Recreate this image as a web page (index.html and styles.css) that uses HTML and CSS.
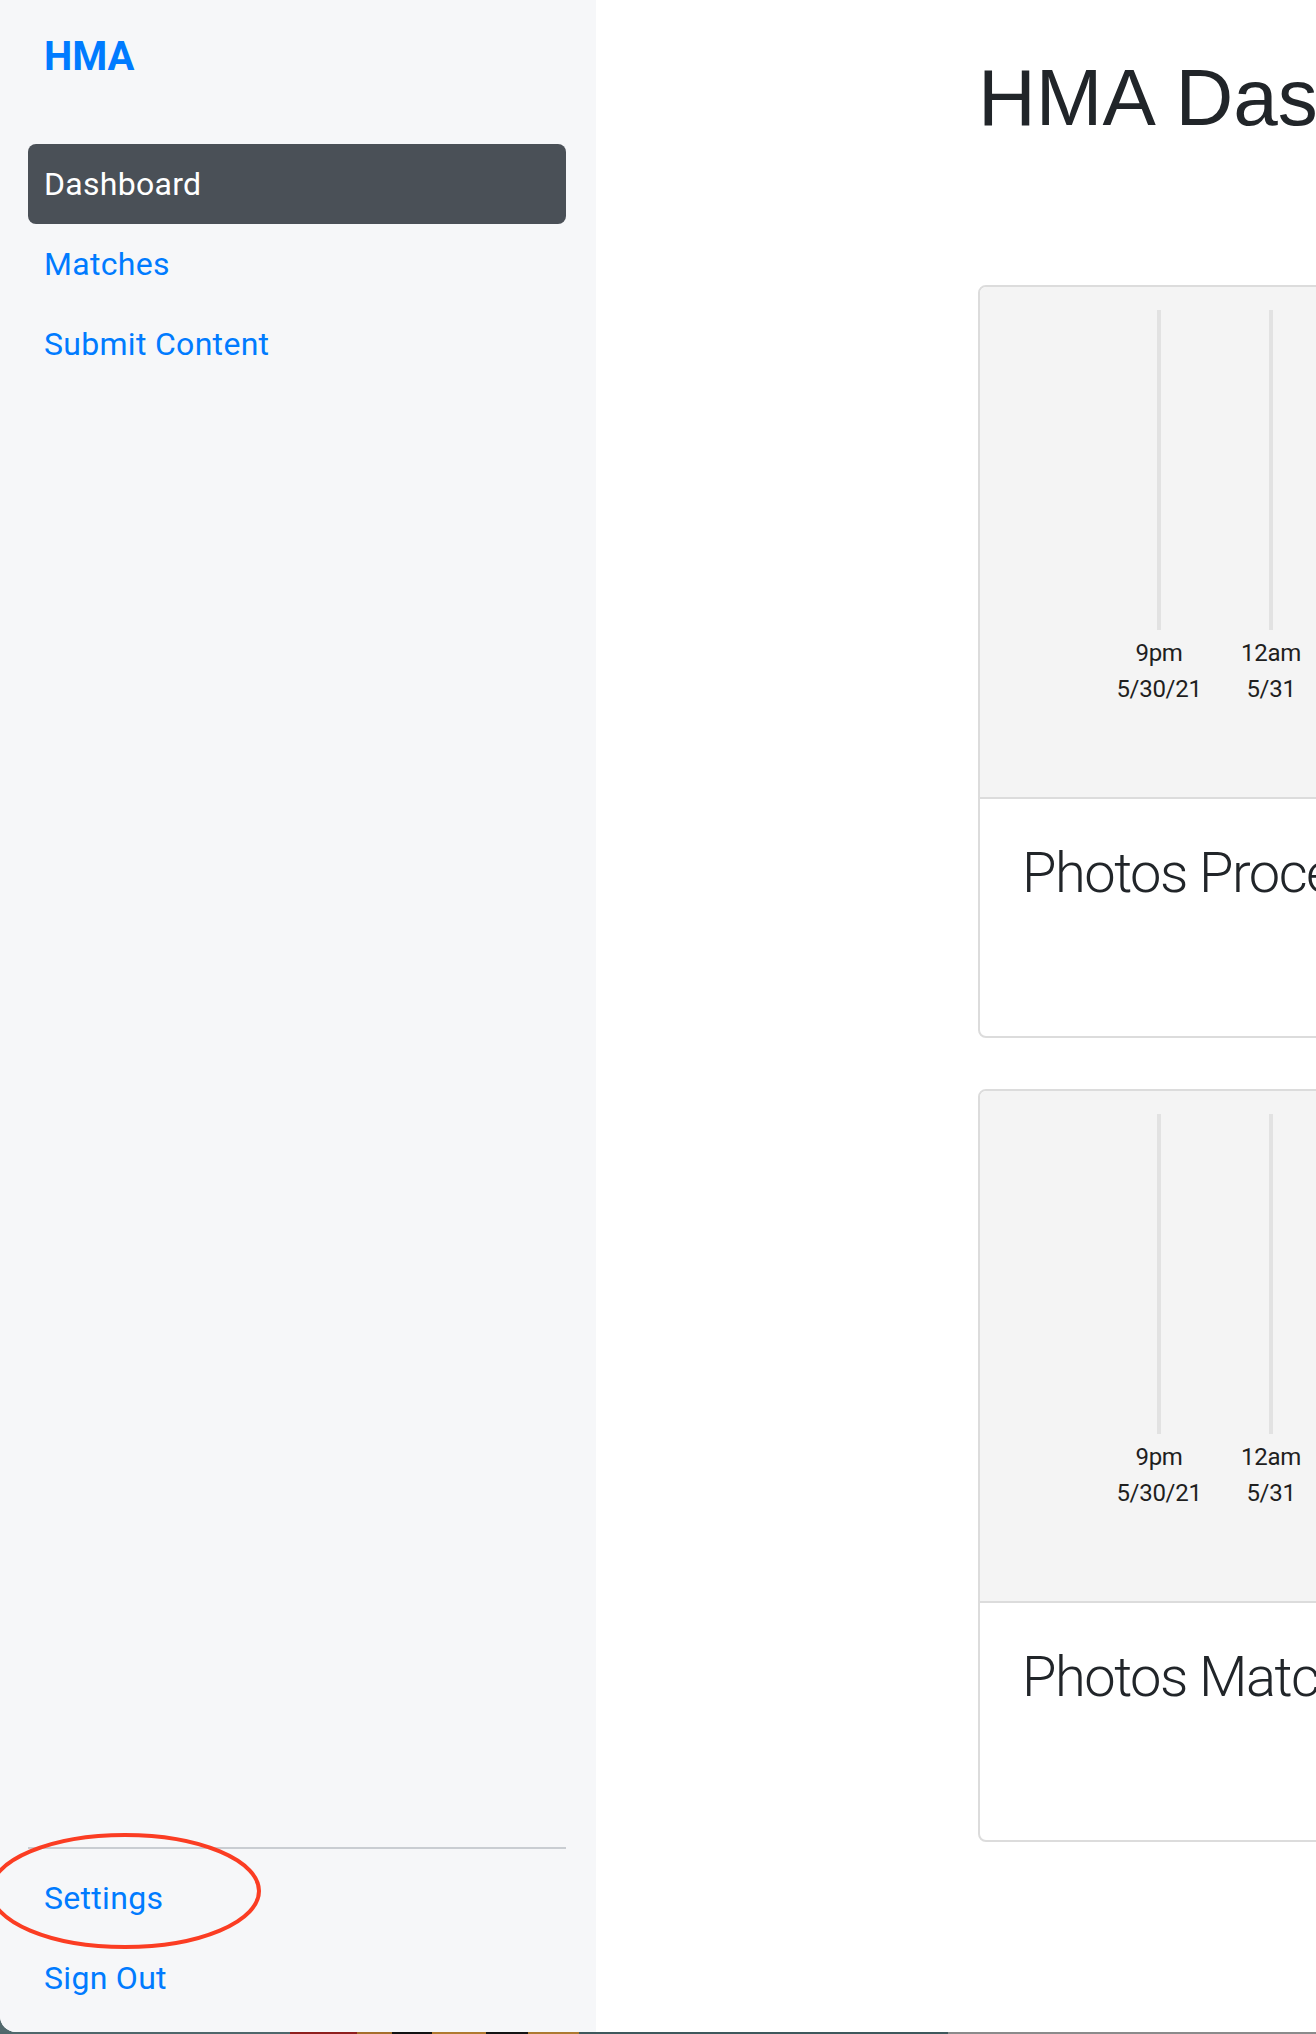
FILE: index.html
```html
<!DOCTYPE html>
<html lang="en">
<head>
<meta charset="utf-8">
<title>HMA Dashboard</title>
<link rel="stylesheet" href="styles.css">
</head>
<body>
<div class="desktop">
  <div class="window">
    <aside class="sidebar">
      <a class="brand" href="#">HMA</a>
      <nav class="nav">
        <a class="nav-link active" href="#">Dashboard</a>
        <a class="nav-link" href="#">Matches</a>
        <a class="nav-link" href="#">Submit Content</a>
      </nav>
      <div class="sidebar-bottom">
        <hr class="divider">
        <a class="nav-link" href="#">Settings</a>
        <a class="nav-link" href="#">Sign Out</a>
        <svg class="annotation" width="300" height="140" viewBox="0 0 300 140" aria-hidden="true">
          <ellipse cx="137" cy="69" rx="134" ry="56" fill="none" stroke="#fb3d23" stroke-width="4"/>
        </svg>
      </div>
    </aside>
    <main class="main">
      <div class="content">
        <h1 class="page-title">HMA Dashboard</h1>
        <section class="card">
          <div class="chart">
            <div class="tick" style="left: 119px;">
              <span class="gridline"></span>
              <span class="tick-label">9pm</span>
              <span class="tick-label">5/30/21</span>
            </div>
            <div class="tick" style="left: 231px;">
              <span class="gridline"></span>
              <span class="tick-label">12am</span>
              <span class="tick-label">5/31</span>
            </div>
          </div>
          <div class="card-body">
            <h3 class="card-title">Photos Processed</h3>
          </div>
        </section>
        <section class="card">
          <div class="chart">
            <div class="tick" style="left: 119px;">
              <span class="gridline"></span>
              <span class="tick-label">9pm</span>
              <span class="tick-label">5/30/21</span>
            </div>
            <div class="tick" style="left: 231px;">
              <span class="gridline"></span>
              <span class="tick-label">12am</span>
              <span class="tick-label">5/31</span>
            </div>
          </div>
          <div class="card-body">
            <h3 class="card-title">Photos Matched</h3>
          </div>
        </section>
      </div>
    </main>
  </div>
  <div class="strip">
    <span class="seg seg-teal1"></span>
    <span class="seg seg-red"></span>
    <span class="seg seg-orange1"></span>
    <span class="seg seg-black1"></span>
    <span class="seg seg-orange2"></span>
    <span class="seg seg-black2"></span>
    <span class="seg seg-orange3"></span>
    <span class="seg seg-teal2"></span>
    <span class="seg seg-gray"></span>
  </div>
</div>
</body>
</html>
```
FILE: styles.css
```css
html, body {
  margin: 0;
  padding: 0;
}

body {
  width: 1316px;
  height: 2034px;
  overflow: hidden;
  background: #52696d;
  font-family: Roboto, "Noto Sans", "Liberation Sans", sans-serif;
}

.desktop {
  display: flex;
  flex-direction: column;
  width: 1316px;
  height: 2034px;
  background: #52696d;
}

.window {
  display: flex;
  height: 2032px;
  flex-shrink: 0;
  overflow: hidden;
  border-bottom-left-radius: 16px;
  background: #ffffff;
}

/* Sidebar */
.sidebar {
  width: 596px;
  flex-shrink: 0;
  box-sizing: border-box;
  display: flex;
  flex-direction: column;
  padding: 27px 30px 14px 28px;
  background: #f6f7f9;
}

.brand {
  display: block;
  padding-left: 16px;
  font-size: 40px;
  line-height: 60px;
  font-weight: 700;
  color: #007bff;
  text-decoration: none;
}

.nav {
  display: flex;
  flex-direction: column;
  margin-top: 57px;
}

.nav-link {
  display: block;
  padding: 16px 16px;
  font-size: 32px;
  line-height: 48px;
  letter-spacing: 0.3px;
  color: #007bff;
  text-decoration: none;
  border-radius: 8px;
}

.nav-link.active {
  background: #4a5057;
  color: #ffffff;
}

.sidebar-bottom {
  position: relative;
  margin-top: auto;
  display: flex;
  flex-direction: column;
}

.divider {
  margin: 0 0 9px 0;
  height: 2px;
  border: 0;
  background: #c9cdd2;
}

.annotation {
  position: absolute;
  left: -40px;
  top: -25px;
  overflow: visible;
  pointer-events: none;
}

/* Main */
.main {
  flex: 1;
  min-width: 0;
  overflow: hidden;
}

.content {
  width: 1300px;
  padding: 50px 0 0 382px;
}

.page-title {
  margin: 0 0 139px 0;
  font-family: "Liberation Sans", Arial, sans-serif;
  font-size: 80px;
  line-height: 96px;
  font-weight: 400;
  letter-spacing: 0;
  word-spacing: 2px;
  color: #212529;
  white-space: nowrap;
}

.card {
  width: 900px;
  border: 2px solid #dcdcdc;
  border-radius: 8px;
  overflow: hidden;
  margin-bottom: 51px;
  background: #ffffff;
}

.chart {
  position: relative;
  height: 510px;
  background: #f4f4f4;
  border-bottom: 2px solid #dcdcdc;
}

.tick {
  position: absolute;
  top: 23px;
  width: 120px;
  display: flex;
  flex-direction: column;
  align-items: center;
}

.gridline {
  display: block;
  width: 4px;
  height: 320px;
  margin-bottom: 5px;
  background: #e2e2e2;
}

.tick-label {
  font-size: 24px;
  line-height: 36px;
  letter-spacing: -0.3px;
  color: #1f1f1f;
  white-space: nowrap;
}

.card-body {
  height: 237px;
  box-sizing: border-box;
  padding: 41px 42px;
}

.card-title {
  margin: 0;
  font-size: 56px;
  line-height: 67px;
  font-weight: 300;
  letter-spacing: -1.5px;
  color: #212529;
  white-space: nowrap;
}

/* Desktop strip under the window */
.strip {
  display: flex;
  height: 2px;
  flex-shrink: 0;
}

.seg { display: block; height: 2px; }
.seg-teal1 { width: 290px; background: #4f676b; }
.seg-red { width: 67px; background: #8f1f1d; }
.seg-orange1 { width: 35px; background: #a66f2c; }
.seg-black1 { width: 40px; background: #121212; }
.seg-orange2 { width: 54px; background: #b07a30; }
.seg-black2 { width: 42px; background: #141414; }
.seg-orange3 { width: 51px; background: #ad7a31; }
.seg-teal2 { width: 369px; background: #3f585c; }
.seg-gray { flex: 1; background: #8b8b8b; }
```
